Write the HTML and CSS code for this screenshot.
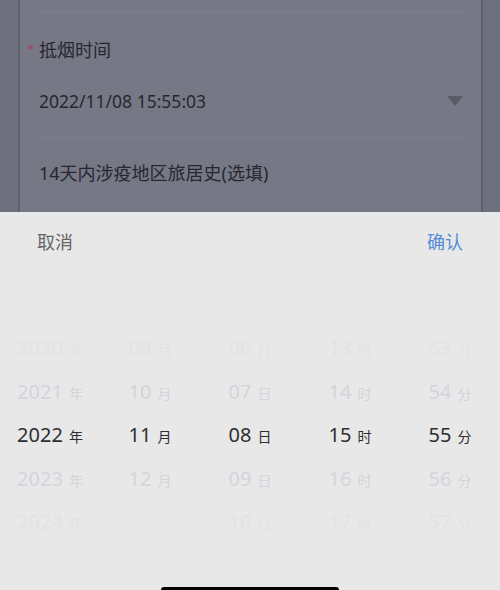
FILE: index.html
```html
<!DOCTYPE html>
<html lang="zh-CN">
<head>
<meta charset="utf-8">
<title>抵烟时间</title>
<link rel="stylesheet" href="styles.css">
</head>
<body>
<div class="page">
  <div class="backdrop">
    <div class="strip"></div>
    <div class="card">
      <div class="divider first"></div>
      <div class="label"><span class="req">*</span>抵烟时间</div>
      <div class="value-row">
        <span class="value">2022/11/08 15:55:03</span>
        <span class="caret"></span>
      </div>
      <div class="divider second"></div>
      <div class="optional">14天内涉疫地区旅居史(选填)</div>
    </div>
    <div class="strip"></div>
  </div>

  <div class="sheet">
    <div class="sheet-head">
      <span class="cancel">取消</span>
      <span class="confirm">确认</span>
    </div>
    <div class="picker">
      <div class="col">
        <div class="item far">2020<span class="unit">年</span></div>
        <div class="item near">2021<span class="unit">年</span></div>
        <div class="item sel">2022<span class="unit">年</span></div>
        <div class="item near">2023<span class="unit">年</span></div>
        <div class="item far">2024<span class="unit">年</span></div>
      </div>
      <div class="col">
        <div class="item far">09<span class="unit">月</span></div>
        <div class="item near">10<span class="unit">月</span></div>
        <div class="item sel">11<span class="unit">月</span></div>
        <div class="item near">12<span class="unit">月</span></div>
        <div class="item far"></div>
      </div>
      <div class="col">
        <div class="item far">06<span class="unit">日</span></div>
        <div class="item near">07<span class="unit">日</span></div>
        <div class="item sel">08<span class="unit">日</span></div>
        <div class="item near">09<span class="unit">日</span></div>
        <div class="item far">10<span class="unit">日</span></div>
      </div>
      <div class="col">
        <div class="item far">13<span class="unit">时</span></div>
        <div class="item near">14<span class="unit">时</span></div>
        <div class="item sel">15<span class="unit">时</span></div>
        <div class="item near">16<span class="unit">时</span></div>
        <div class="item far">17<span class="unit">时</span></div>
      </div>
      <div class="col">
        <div class="item far">53<span class="unit">分</span></div>
        <div class="item near">54<span class="unit">分</span></div>
        <div class="item sel">55<span class="unit">分</span></div>
        <div class="item near">56<span class="unit">分</span></div>
        <div class="item far">57<span class="unit">分</span></div>
      </div>
    </div>
    <div class="home-bar"></div>
  </div>
</div>
</body>
</html>
```

FILE: styles.css
```css
* { box-sizing: border-box; }
html, body {
  margin: 0;
  padding: 0;
}
body {
  font-family: "Noto Sans", "Noto Sans CJK SC", sans-serif;
  background: #767785;
}
.page {
  position: relative;
  width: 500px;
  height: 590px;
  overflow: hidden;
  background: #767785;
}
.backdrop {
  display: flex;
  height: 100%;
}
.strip {
  width: 18px;
  background: #6f707e;
  flex: none;
}
.strip:last-child { width: 17px; }
.card {
  flex: 1;
  background: #777886;
  border-left: 2px solid #5f606d;
  border-right: 2px solid #5f606d;
  padding: 0 18px;
  display: flex;
  flex-direction: column;
  color: #26272f;
  font-size: 18px;
}
.divider {
  height: 1px;
  background: #7f808e;
}
.divider.first { margin-top: 11px; }
.label {
  margin-top: 24px;
  line-height: 26px;
  height: 26px;
  position: relative;
  padding-left: 1px;
  font-family: "Noto Sans CJK SC", sans-serif;
}
.req {
  position: absolute;
  left: -11px;
  top: 2px;
  color: #a24866;
  font-size: 17px;
}
.value-row {
  margin-top: 26px;
  height: 26px;
  display: flex;
  align-items: center;
  justify-content: space-between;
  padding-left: 1px;
}
.value {
  line-height: 26px;
  font-size: 17.5px;
}
.caret {
  width: 0;
  height: 0;
  border-left: 8px solid transparent;
  border-right: 8px solid transparent;
  border-top: 10px solid #5a5b68;
}
.divider.second { margin-top: 23px; }
.optional {
  margin-top: 22px;
  line-height: 26px;
  padding-left: 1px;
  font-family: "Noto Sans", "Noto Sans CJK SC", sans-serif;
}

.sheet {
  position: absolute;
  left: 0;
  right: 0;
  top: 212px;
  bottom: 0;
  background: #e8e8e8;
  display: flex;
  flex-direction: column;
}
.sheet-head {
  height: 58px;
  display: flex;
  align-items: center;
  justify-content: space-between;
  padding: 0 37px;
  font-family: "Noto Sans CJK SC", sans-serif;
  font-size: 18px;
}
.cancel { color: #666669; }
.confirm { color: #548cd5; }
.picker {
  margin-top: 57px;
  display: grid;
  grid-template-columns: repeat(5, 100px);
}
.col {
  display: flex;
  flex-direction: column;
}
.item {
  height: 43.5px;
  display: flex;
  align-items: baseline;
  justify-content: center;
  padding-top: 7px;
  font-size: 20px;
  line-height: 28px;
  color: #d3d3dc;
}
.unit {
  font-family: "Noto Sans CJK SC", sans-serif;
  font-size: 14px;
  margin-left: 6px;
}
.item.sel { color: #2e2e31; }
.item.near { color: #d4d4dd; }
.item.far { color: #e2e2e7; }
.home-bar {
  margin-top: auto;
  align-self: center;
  width: 178px;
  height: 4px;
  margin-bottom: -1px;
  background: #000;
  border-radius: 3px 3px 0 0;
}
```
